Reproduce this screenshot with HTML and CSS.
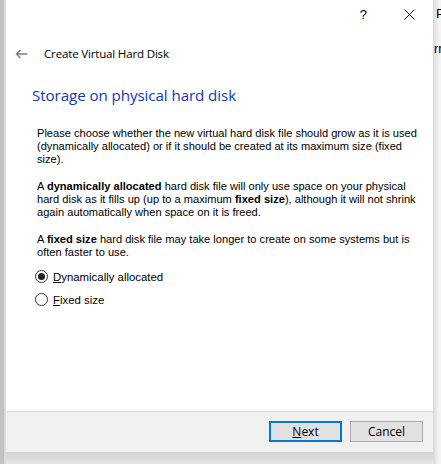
FILE: index.html
```html
<!DOCTYPE html>
<html>
<head>
<meta charset="utf-8">
<link rel="stylesheet" href="styles.css">
</head>
<body>
<div class="desktop">
  <div class="edge-left"></div>
  <div class="window-col">
    <div class="window">
      <div class="titlebar">
        <span class="help">?</span>
        <svg class="close" width="11" height="11" viewBox="0 0 11 11"><path d="M0.5 0.5L10.5 10.5M10.5 0.5L0.5 10.5" stroke="#111" stroke-width="1" fill="none"/></svg>
      </div>
      <div class="header">
        <svg class="back" width="13" height="10" viewBox="0 0 13 10"><path d="M12.5 5H1.5M5.5 1L1.5 5L5.5 9" stroke="#808080" stroke-width="1.4" fill="none"/></svg>
        <span class="title">Create Virtual Hard Disk</span>
      </div>
      <div class="content">
        <h1 class="heading">Storage on physical hard disk</h1>
        <div class="body">
          <p>Please choose whether the new virtual hard disk file should grow as it is used<br>(dynamically allocated) or if it should be created at its maximum size (fixed<br>size).</p>
          <p>A <b>dynamically allocated</b> hard disk file will only use space on your physical<br>hard disk as it fills up (up to a maximum <b>fixed size</b>), although it will not shrink<br>again automatically when space on it is freed.</p>
          <p>A <b>fixed size</b> hard disk file may take longer to create on some systems but is<br>often faster to use.</p>
        </div>
        <div class="radios">
          <div class="radio-row"><span class="radio checked"></span><span class="label"><u>D</u>ynamically allocated</span></div>
          <div class="radio-row"><span class="radio"></span><span class="label"><u>F</u>ixed size</span></div>
        </div>
      </div>
      <div class="footer">
        <button class="btn btn-default"><u>N</u>ext</button>
        <button class="btn">Cancel</button>
      </div>
    </div>
    <div class="shadow-bottom"></div>
  </div>
  <div class="behind">
    <span class="behind-p">P</span>
    <span class="behind-rn">rn</span>
  </div>
</div>
</body>
</html>
```

FILE: styles.css
```css
* { box-sizing: border-box; }
html, body { margin: 0; padding: 0; }
body {
  width: 441px;
  height: 464px;
  overflow: hidden;
  font-family: "Open Sans", "Noto Sans", sans-serif;
  color: #000;
}
.desktop {
  display: flex;
  width: 441px;
  height: 464px;
  background: #e4e4e4;
}
.edge-left {
  width: 6px;
  flex: none;
  background: linear-gradient(to right, #c2c2c2 0, #c2c2c2 4px, #d6d6d6 4px, #dedede 6px);
}
.window-col {
  width: 427px;
  flex: none;
  display: flex;
  flex-direction: column;
}
.window {
  height: 452px;
  background: #fff;
  display: flex;
  flex-direction: column;
}
.shadow-bottom {
  flex: 1;
  background: linear-gradient(to bottom, #d2d2d2, #e6e6e6);
}
.titlebar {
  height: 30px;
  display: flex;
  align-items: center;
  justify-content: flex-end;
  padding-right: 18px;
  gap: 37px;
}
.help {
  font-family: "Liberation Sans", sans-serif;
  font-size: 13px;
  line-height: 13px;
  margin-top: -2px;
}
.close { margin-top: -2px; }
.header {
  height: 46px;
  display: flex;
  align-items: center;
  padding-left: 9px;
  padding-top: 2px;
  padding-bottom: 1px;
}
.back { margin-right: 16px; margin-top: 1px; }
.title {
  font-size: 11.6px;
  letter-spacing: -0.2px;
}
.content {
  flex: 1;
  padding-left: 26px;
  padding-right: 4px;
}
.heading {
  margin: 9px 0 0 0;
  font-weight: normal;
  font-size: 15.2px;
  color: #1538b4;
  letter-spacing: -0.1px;
  line-height: 20px;
}
.body {
  margin-top: 22px;
  padding-left: 5px;
  font-family: "Liberation Sans", sans-serif;
  font-size: 11.1px;
  line-height: 13px;
  white-space: nowrap;
}
.body p { margin: 0 0 14px 0; }
.body p:last-child { margin-bottom: 0; }
.body b { font-weight: bold; }
.radios {
  margin-top: 11px;
  padding-left: 3px;
  display: flex;
  flex-direction: column;
  gap: 10px;
}
.radio-row {
  display: flex;
  align-items: center;
  height: 13px;
  font-family: "Liberation Sans", sans-serif;
  font-size: 11.4px;
}
.radio {
  width: 13px;
  height: 13px;
  border: 1px solid #333;
  border-radius: 50%;
  margin-right: 5px;
  position: relative;
  background: #fff;
}
.radio.checked::after {
  content: "";
  position: absolute;
  left: 2px; top: 2px;
  width: 7px; height: 7px;
  border-radius: 50%;
  background: #222;
}
.footer {
  height: 41px;
  background: #f0f0f0;
  border-top: 1px solid #dcdcdc;
  display: flex;
  justify-content: flex-end;
  align-items: center;
  gap: 8px;
  padding-right: 10px;
  padding-bottom: 1px;
}
.btn {
  width: 73px;
  height: 21px;
  border: 1px solid #adadad;
  background: #e1e1e1;
  font-family: "Open Sans", "Noto Sans", sans-serif;
  font-size: 12px;
  color: #000;
  padding: 0;
  line-height: 18px;
}
.btn-default {
  border: 2px solid #0078d7;
}
.behind {
  flex: 1;
  display: flex;
  flex-direction: column;
  background: linear-gradient(to right, #d8d8d8 0, #e8e8e8 3px, #f4f4f4 6px);
  padding-left: 3px;
  font-family: "Liberation Sans", sans-serif;
  font-size: 13px;
}
.behind-p { margin-top: 6px; }
.behind-rn { margin-top: 20px; margin-left: -2px; }
```
